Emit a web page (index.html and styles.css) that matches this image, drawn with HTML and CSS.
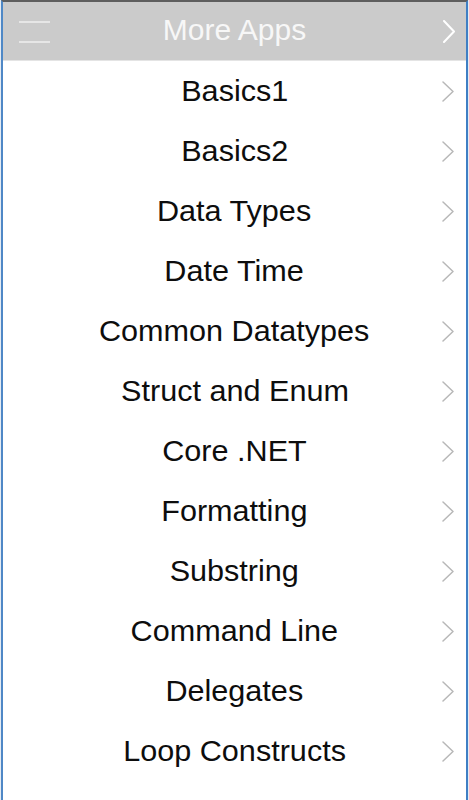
FILE: index.html
```html
<!DOCTYPE html>
<html>
<head>
<meta charset="utf-8">
<link rel="stylesheet" href="styles.css">
</head>
<body>
<div class="frame">
  <header class="topbar">
    <div class="menu"><span></span><span></span></div>
    <div class="title">More Apps</div>
    <svg class="chev chev-white" viewBox="0 0 12 23" width="12" height="23"><polyline points="1,1 11,11.5 1,22" /></svg>
  </header>
  <ul class="list">
    <li class="row"><span class="label">Basics1</span><svg class="chev" viewBox="0 0 12 21" width="12" height="21"><polyline points="1,1 11,10.5 1,20" /></svg></li>
    <li class="row"><span class="label">Basics2</span><svg class="chev" viewBox="0 0 12 21" width="12" height="21"><polyline points="1,1 11,10.5 1,20" /></svg></li>
    <li class="row"><span class="label">Data Types</span><svg class="chev" viewBox="0 0 12 21" width="12" height="21"><polyline points="1,1 11,10.5 1,20" /></svg></li>
    <li class="row"><span class="label">Date Time</span><svg class="chev" viewBox="0 0 12 21" width="12" height="21"><polyline points="1,1 11,10.5 1,20" /></svg></li>
    <li class="row"><span class="label">Common Datatypes</span><svg class="chev" viewBox="0 0 12 21" width="12" height="21"><polyline points="1,1 11,10.5 1,20" /></svg></li>
    <li class="row"><span class="label">Struct and Enum</span><svg class="chev" viewBox="0 0 12 21" width="12" height="21"><polyline points="1,1 11,10.5 1,20" /></svg></li>
    <li class="row"><span class="label">Core .NET</span><svg class="chev" viewBox="0 0 12 21" width="12" height="21"><polyline points="1,1 11,10.5 1,20" /></svg></li>
    <li class="row"><span class="label">Formatting</span><svg class="chev" viewBox="0 0 12 21" width="12" height="21"><polyline points="1,1 11,10.5 1,20" /></svg></li>
    <li class="row"><span class="label">Substring</span><svg class="chev" viewBox="0 0 12 21" width="12" height="21"><polyline points="1,1 11,10.5 1,20" /></svg></li>
    <li class="row"><span class="label">Command Line</span><svg class="chev" viewBox="0 0 12 21" width="12" height="21"><polyline points="1,1 11,10.5 1,20" /></svg></li>
    <li class="row"><span class="label">Delegates</span><svg class="chev" viewBox="0 0 12 21" width="12" height="21"><polyline points="1,1 11,10.5 1,20" /></svg></li>
    <li class="row"><span class="label">Loop Constructs</span><svg class="chev" viewBox="0 0 12 21" width="12" height="21"><polyline points="1,1 11,10.5 1,20" /></svg></li>
  </ul>
</div>
</body>
</html>
```
FILE: styles.css
```css
html, body {
  margin: 0;
  padding: 0;
  background: #e4ebf3;
  height: 800px;
  overflow: hidden;
}
.frame {
  margin-left: 1px;
  width: 463px;
  height: 798px;
  border-left: 2px solid #4f88c6;
  border-right: 2px solid #3f7fc4;
  border-top: 2px solid #5e5e5e;
  background: #ffffff;
  font-family: "Liberation Sans", Arial, sans-serif;
}
.topbar {
  height: 58px;
  background: #cbcbcb;
  border-bottom: 1px solid #e4e4e4;
  display: grid;
  grid-template-columns: 1fr auto 1fr;
  align-items: center;
}
.menu {
  justify-self: start;
  margin-left: 16px;
  display: flex;
  flex-direction: column;
  gap: 18px;
  margin-top: 1px;
}
.menu span {
  display: block;
  width: 31px;
  height: 2px;
  background: #e6e6e6;
}
.title {
  color: #f7f7f7;
  font-size: 30px;
  line-height: 34px;
  margin-top: -2px;
}
.chev {
  justify-self: end;
  margin-right: 12px;
  fill: none;
  stroke: #b8b8b8;
  stroke-width: 1.5;
  stroke-linecap: round;
  stroke-linejoin: round;
}
.chev-white {
  stroke: #ffffff;
  stroke-width: 2;
  margin-right: 11px;
}
.list {
  list-style: none;
  margin: 0;
  padding: 0;
}
.row {
  height: 60px;
  display: grid;
  grid-template-columns: 1fr auto 1fr;
  align-items: center;
}
.row::before {
  content: "";
}
.label {
  display: inline-block;
  color: #0d0d0d;
  font-size: 29px;
  line-height: 34px;
  white-space: nowrap;
  transform: scaleX(1.055);
}
```
